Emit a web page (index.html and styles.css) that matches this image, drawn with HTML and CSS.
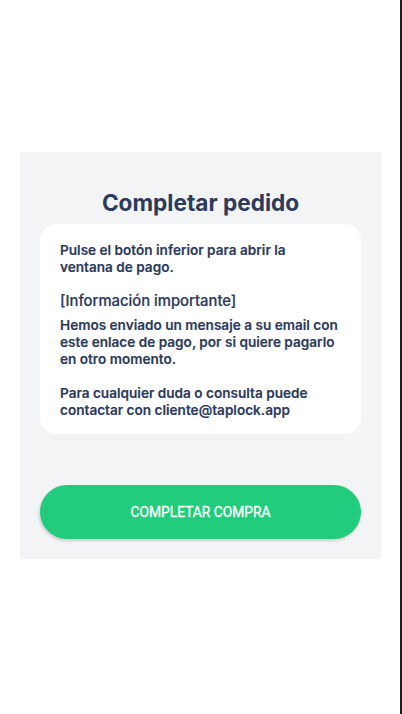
FILE: index.html
```html
<!DOCTYPE html>
<html lang="es">
<head>
<meta charset="utf-8">
<link rel="stylesheet" href="styles.css">
</head>
<body>
<div class="page">
  <section class="panel">
    <h1 class="title">Completar pedido</h1>
    <div class="card">
      <p class="text">Pulse el botón inferior para abrir la ventana de pago.</p>
      <p class="important">[Información importante]</p>
      <p class="text">Hemos enviado un mensaje a su email con este enlace de pago, por si quiere pagarlo en otro momento.</p>
      <p class="text spaced">Para cualquier duda o consulta puede contactar con cliente@taplock.app</p>
    </div>
    <button class="buy">COMPLETAR COMPRA</button>
  </section>
</div>
</body>
</html>
```

FILE: styles.css
```css
html, body {
  margin: 0;
  padding: 0;
  background: #ffffff;
}

.page {
  width: 402px;
  height: 714px;
  border-right: 2px solid #1e1e1e;
  padding-top: 152px;
  box-sizing: border-box;
  font-family: Inter, "Noto Sans", sans-serif;
}

.panel {
  margin-left: 20px;
  width: 361px;
  height: 407px;
  box-sizing: border-box;
  background: #f3f4f6;
  padding: 37px 20px 20px;
  display: flex;
  flex-direction: column;
}

.title {
  margin: 0;
  font-size: 22.6px;
  line-height: 28px;
  font-weight: 700;
  color: #2c3a5b;
  text-align: center;
}

.card {
  margin-top: 7px;
  background: #ffffff;
  border-radius: 16px;
  padding: 18px 22px 15px 20px;
}

.text {
  margin: 0;
  font-size: 13.6px;
  line-height: 17px;
  font-weight: 600;
  color: #2c3a5b;
  -webkit-text-stroke: 0.15px #2c3a5b;
}

.important {
  margin: 17px 0 7px;
  font-size: 14.8px;
  line-height: 17px;
  font-weight: 500;
  color: #2c3a5b;
  -webkit-text-stroke: 0.2px #2c3a5b;
}

.spaced {
  margin-top: 17px;
}

.buy {
  margin-top: 51px;
  height: 54px;
  border: none;
  border-radius: 27px;
  background: #21cd7c;
  color: #ffffff;
  font-family: Roboto, "Liberation Sans", sans-serif;
  font-size: 13.8px;
  font-weight: 400;
  -webkit-text-stroke: 0.3px #ffffff;
  box-shadow: -1px 2px 3px rgba(0, 0, 0, 0.16);
  padding: 0;
}
```
